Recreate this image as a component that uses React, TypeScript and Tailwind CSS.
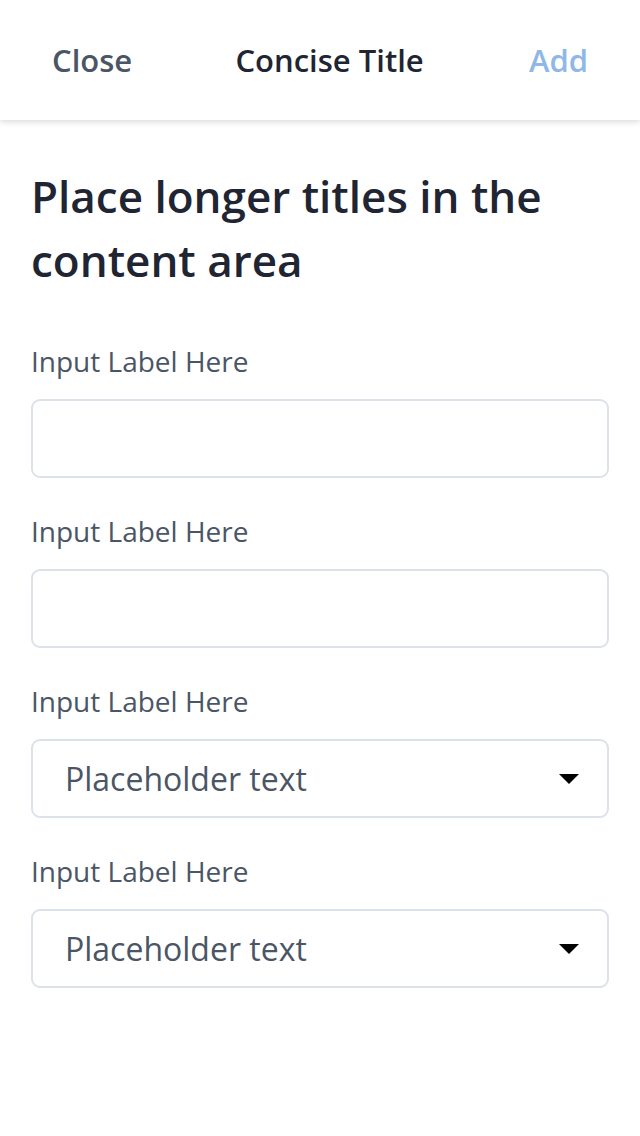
const font = { fontFamily: '"Open Sans", "Noto Sans", sans-serif' };

function Field({ label, select }: { label: string; select?: boolean }) {
  return (
    <div className="flex flex-col">
      <label className="text-[28px] leading-[40px] text-[#4a5666]">{label}</label>
      <div className="mt-[18px] flex h-[79px] items-center justify-between rounded-[9px] border-2 border-[#dde1ea] bg-white pr-[28px] pl-[32px]">
        {select ? (
          <>
            <span className="text-[32px] text-[#4a5666]">Placeholder text</span>
            <svg width="20" height="10" viewBox="0 0 20 10">
              <path d="M0 0h20L10 10z" fill="#000" />
            </svg>
          </>
        ) : null}
      </div>
    </div>
  );
}

export default function App() {
  return (
    <div className="min-h-[1136px] bg-white" style={font}>
      <header className="flex h-[120px] items-center justify-between bg-white pr-[52px] pl-[52px] shadow-[0_2px_6px_rgba(0,0,0,0.15)]">
        <button type="button" className="text-[31px] font-semibold text-[#4a5666]">
          Close
        </button>
        <h1 className="-ml-[2px] text-[31px] font-semibold text-[#1f2533]">Concise Title</h1>
        <button type="button" className="text-[31px] font-semibold text-[#90b8e6]">
          Add
        </button>
      </header>

      <main className="px-[31px] pt-[44px]">
        <h2 className="text-[44px] leading-[64px] font-semibold text-[#1f2533]">
          Place longer titles in the content area
        </h2>
        <div className="mt-[49px] flex flex-col gap-[33px]">
          <Field label="Input Label Here" />
          <Field label="Input Label Here" />
          <Field label="Input Label Here" select />
          <Field label="Input Label Here" select />
        </div>
      </main>
    </div>
  );
}
